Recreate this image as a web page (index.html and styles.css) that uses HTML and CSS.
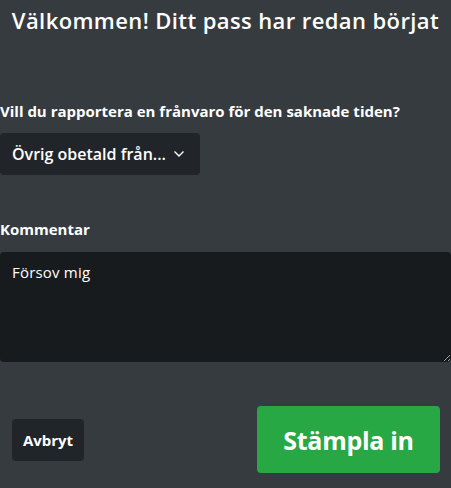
FILE: index.html
```html
<!DOCTYPE html>
<html lang="sv">
<head>
    <meta charset="UTF-8">
    <meta name="viewport" content="width=device-width, initial-scale=1.0">
    <title>Stämpla in</title>
    <link rel="stylesheet" href="styles.css">
</head>
<body>
    <div class="punch-container">
        <!-- Title -->
        <h1 class="title">Välkommen! Ditt pass har redan börjat</h1>

        <form id="punchForm" class="punch-form">
            <div class="form-group">
                <label for="absence">Vill du rapportera en frånvaro för den saknade tiden?</label>
                <button type="button" id="absence" class="select-btn">
                    <span class="select-text">Övrig obetald från...</span>
                    <svg class="chevron" width="12" height="8" viewBox="0 0 12 8">
                        <path d="M1.5 1.5 L6 6 L10.5 1.5" fill="none" stroke="#fff" stroke-width="1.4"/>
                    </svg>
                </button>
            </div>

            <div class="form-group comment-group">
                <label for="comment">Kommentar</label>
                <textarea id="comment" name="comment">Försov mig</textarea>
            </div>

            <div class="actions">
                <button type="button" class="btn-cancel">Avbryt</button>
                <button type="submit" class="btn-punch">Stämpla in</button>
            </div>
        </form>
    </div>
</body>
</html>
```

FILE: styles.css
```css
/* General body styling */
body {
    font-family: 'Open Sans', sans-serif;
    background: #353b3f;
    color: #fff;
    margin: 0;
}

.punch-container {
    width: 451px;
    height: 488px;
}

.title {
    font-size: 22px;
    font-weight: 600;
    text-align: center;
    margin: 0;
    padding-top: 6px;
    line-height: 28px;
    letter-spacing: 0.4px;
}

.punch-form {
    margin-top: 67px;
}

.form-group {
    margin-bottom: 30px;
}

label {
    display: block;
    font-size: 15px;
    font-weight: 700;
    line-height: 20px;
    margin-bottom: 12px;
}

.select-btn {
    display: flex;
    align-items: center;
    gap: 7px;
    height: 42px;
    padding: 0 15px 0 12px;
    background: #212529;
    color: #fff;
    border: none;
    border-radius: 4px;
    font-family: inherit;
    font-size: 16px;
    font-weight: 600;
}

.comment-group {
    margin-bottom: 0;
}

.comment-group label {
    margin-top: 44px;
    margin-bottom: 13px;
}

textarea {
    display: block;
    width: 100%;
    height: 110px;
    box-sizing: border-box;
    background: #181b1e;
    color: #fff;
    border: none;
    border-radius: 4px;
    padding: 9px 12px;
    font-family: inherit;
    font-size: 15px;
    line-height: 22px;
    letter-spacing: 0.2px;
    resize: vertical;
}

textarea:focus {
    outline: none;
}

.actions {
    display: flex;
    justify-content: space-between;
    align-items: center;
    padding: 44px 11px 0 12px;
}

.btn-cancel {
    height: 42px;
    width: 72px;
    padding: 0;
    background: #212529;
    color: #fff;
    border: none;
    border-radius: 4px;
    font-family: inherit;
    font-size: 15px;
    font-weight: 700;
    cursor: pointer;
}

.btn-punch {
    width: 183px;
    height: 67px;
    background: #28a745;
    color: #fff;
    border: none;
    border-radius: 4px;
    font-family: inherit;
    font-size: 25px;
    font-weight: 700;
    letter-spacing: -0.3px;
    cursor: pointer;
}
```
